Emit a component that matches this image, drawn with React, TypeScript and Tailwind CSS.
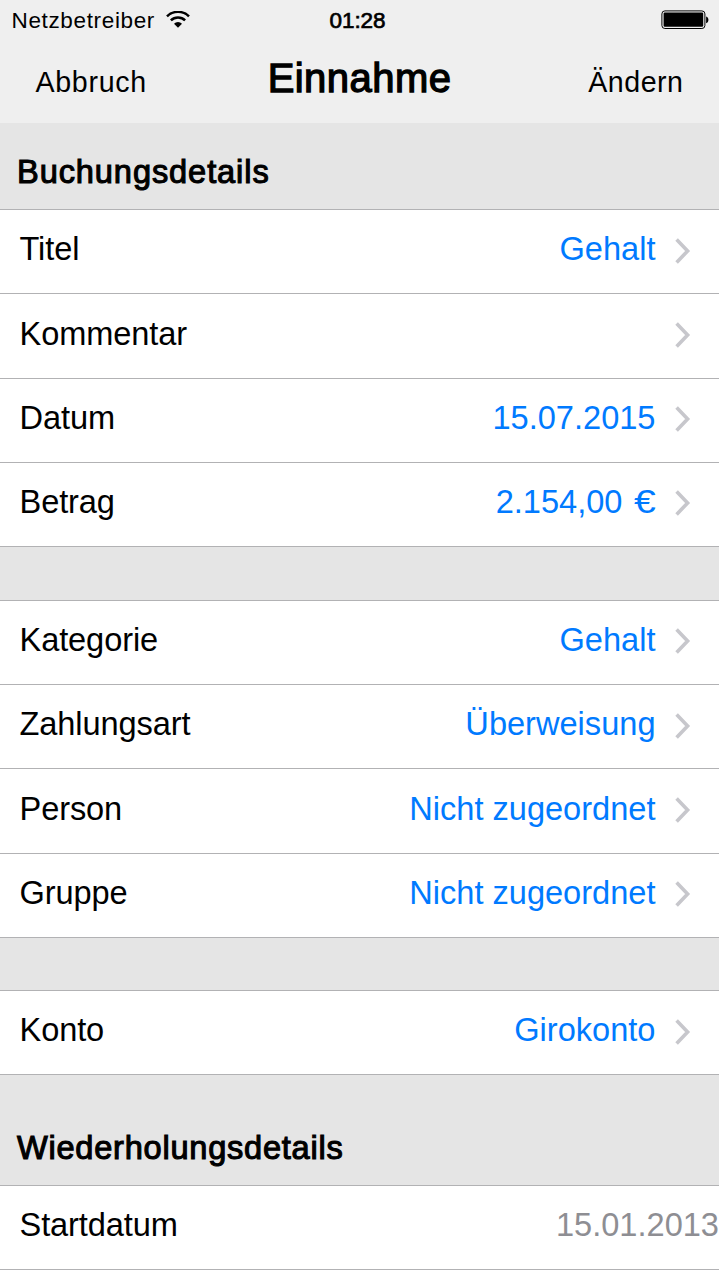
import { clsx } from 'clsx';

interface Entry {
  label: string;
  value?: string;
  currency?: string;
  readOnly?: boolean;
}

const bookingRows: Entry[] = [
  { label: 'Titel', value: 'Gehalt' },
  { label: 'Kommentar' },
  { label: 'Datum', value: '15.07.2015' },
  { label: 'Betrag', value: '2.154,00', currency: '€' },
];

const categoryRows: Entry[] = [
  { label: 'Kategorie', value: 'Gehalt' },
  { label: 'Zahlungsart', value: 'Überweisung' },
  { label: 'Person', value: 'Nicht zugeordnet' },
  { label: 'Gruppe', value: 'Nicht zugeordnet' },
];

const accountRows: Entry[] = [{ label: 'Konto', value: 'Girokonto' }];

const repeatRows: Entry[] = [{ label: 'Startdatum', value: '15.01.2013', readOnly: true }];

function WifiIcon() {
  return (
    <svg width="24" height="18" viewBox="0 0 24 18" fill="none" stroke="#000" strokeWidth="2.5">
      <path d="M1 5.4 A15.6 15.6 0 0 1 23 5.4" />
      <path d="M4.9 9.4 A10 10 0 0 1 19.1 9.4" />
      <path d="M12 16.7 L8 12.8 A5.6 5.6 0 0 1 16 12.8 Z" fill="#000" stroke="none" />
    </svg>
  );
}

function BatteryIcon() {
  return (
    <svg width="48" height="20" viewBox="0 0 48 20">
      <rect x="0.9" y="0.9" width="43" height="17.6" rx="3" fill="none" stroke="#000" strokeWidth="1" />
      <rect x="2.6" y="2.6" width="39.6" height="14.2" rx="1.2" fill="#000" />
      <path d="M45.1 6.4 C48.2 7 48.2 12.6 45.1 13.2 Z" fill="#000" />
    </svg>
  );
}

function Chevron() {
  return (
    <svg width="16" height="26" viewBox="0 0 16 26" fill="none" stroke="#c7c7cc" strokeWidth="3.6">
      <path d="M1.6 1.6 L12.6 13 L1.6 24.4" />
    </svg>
  );
}

function Row({ label, value, currency, readOnly }: Entry) {
  return (
    <div className="flex h-[84.25px] items-center border-b border-[#b2b2b4] bg-white pl-[19.5px] text-[32.6px]">
      <span className="pb-1 tracking-[-0.1px]">{label}</span>
      <span className={clsx('ml-auto pb-1', readOnly ? 'text-[#8e8e93]' : 'mr-[19.5px] text-[#007aff]')}>
        {value}
        {currency && <span className="ml-[11px] inline-block w-[22px] origin-left scale-x-[1.2]">{currency}</span>}
      </span>
      {!readOnly && (
        <div className="mr-7 pb-0.5">
          <Chevron />
        </div>
      )}
    </div>
  );
}

function Rows({ items }: { items: Entry[] }) {
  return (
    <div>
      {items.map((item) => (
        <Row key={item.label} {...item} />
      ))}
    </div>
  );
}

export default function App() {
  return (
    <div className="h-[1280px] w-full overflow-hidden bg-white font-['Liberation_Sans',Arial,sans-serif] leading-none text-black">
      <header className="h-[123px] bg-[#efefef]">
        {/* Status bar */}
        <div className="grid h-10 grid-cols-3 items-center text-[22.5px]">
          <div className="flex items-center gap-[11px] pl-[11.5px]">
            <span className="pt-0.5 tracking-[0.65px]">Netzbetreiber</span>
            <WifiIcon />
          </div>
          <span className="pt-0.5 pr-1 text-center tracking-[-0.1px] [-webkit-text-stroke:0.7px_#000]">01:28</span>
          <div className="flex justify-end pr-2.5">
            <BatteryIcon />
          </div>
        </div>
        {/* Navigation */}
        <div className="grid grid-cols-3 items-baseline pt-[18px] text-[28.6px]">
          <span className="pl-[35.5px] tracking-[0.7px]">Abbruch</span>
          <h1 className="text-center text-[40px] tracking-[0.45px] [-webkit-text-stroke:1.3px_#000]">Einnahme</h1>
          <span className="pr-[35.5px] text-right tracking-[0.5px]">Ändern</span>
        </div>
      </header>

      <main>
        <h2 className="flex h-[87px] items-end border-b border-[#b2b2b4] bg-[#e5e5e5] pb-5 pl-[17px] text-[32.6px] tracking-[0.9px] [-webkit-text-stroke:1.1px_#000]">
          Buchungsdetails
        </h2>
        <Rows items={bookingRows} />
        <div className="h-[53.75px] border-b border-[#b2b2b4] bg-[#e5e5e5]" />
        <Rows items={categoryRows} />
        <div className="h-[53.25px] border-b border-[#b2b2b4] bg-[#e5e5e5]" />
        <Rows items={accountRows} />
        <h2 className="flex h-[110.75px] items-end border-b border-[#b2b2b4] bg-[#e5e5e5] pb-5 pl-[17px] text-[32.6px] tracking-[0.75px] [-webkit-text-stroke:1.1px_#000]">
          Wiederholungsdetails
        </h2>
        <Rows items={repeatRows} />
      </main>
    </div>
  );
}
